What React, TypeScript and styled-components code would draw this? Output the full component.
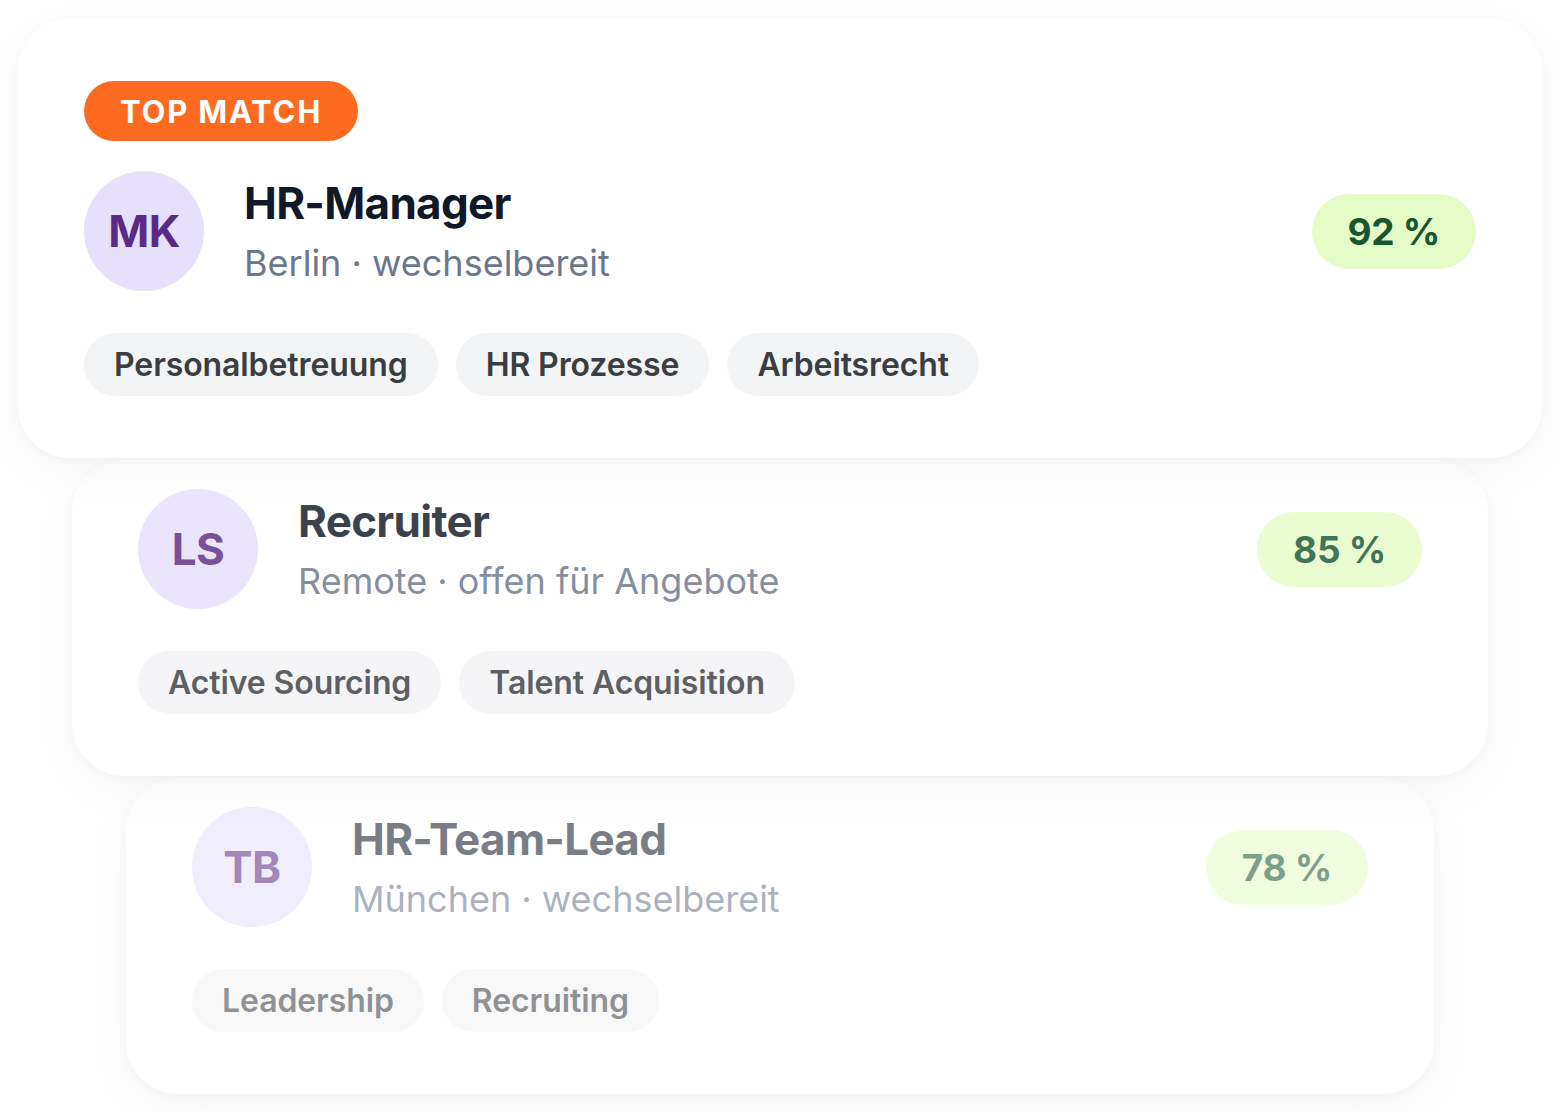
import styled, { createGlobalStyle } from "styled-components";

type Candidate = {
  initials: string;
  title: string;
  meta: string;
  score: number;
  tags: string[];
  topMatch?: boolean;
};

const candidates: Candidate[] = [
  {
    initials: "MK",
    title: "HR-Manager",
    meta: "Berlin · wechselbereit",
    score: 92,
    tags: ["Personalbetreuung", "HR Prozesse", "Arbeitsrecht"],
    topMatch: true,
  },
  {
    initials: "LS",
    title: "Recruiter",
    meta: "Remote · offen für Angebote",
    score: 85,
    tags: ["Active Sourcing", "Talent Acquisition"],
  },
  {
    initials: "TB",
    title: "HR-Team-Lead",
    meta: "München · wechselbereit",
    score: 78,
    tags: ["Leadership", "Recruiting"],
  },
];

// each card further down the stack is narrower and more faded
const depthStyles = [
  { inset: 0, fade: 1, padTop: 63 },
  { inset: 54, fade: 0.82, padTop: 29 },
  { inset: 108, fade: 0.56, padTop: 29 },
];

export default function App() {
  return (
    <>
      <GlobalStyle />
      <Stack>
        {candidates.map((c, i) => {
          const d = depthStyles[i];
          return (
            <Card key={c.title} $inset={d.inset} $padTop={d.padTop} $level={i}>
              <Content $fade={d.fade}>
                {c.topMatch && <Badge>TOP MATCH</Badge>}
                <Header>
                  <Avatar>{c.initials}</Avatar>
                  <Info>
                    <Name>{c.title}</Name>
                    <Meta>{c.meta}</Meta>
                  </Info>
                  <Score>{c.score} %</Score>
                </Header>
                <Tags>
                  {c.tags.map((t) => (
                    <Tag key={t}>{t}</Tag>
                  ))}
                </Tags>
              </Content>
            </Card>
          );
        })}
      </Stack>
    </>
  );
}

const GlobalStyle = createGlobalStyle`
  html, body {
    margin: 0;
    background: #ffffff;
    font-family: Inter, "Noto Sans", "Liberation Sans", sans-serif;
    -webkit-font-smoothing: antialiased;
  }
`;

const Stack = styled.div`
  display: flex;
  flex-direction: column;
  gap: 2px;
  padding: 18px;
`;

const Card = styled.div<{ $inset: number; $padTop: number; $level: number }>`
  position: relative;
  z-index: ${(p) => 3 - p.$level};
  margin: 0 ${(p) => p.$inset}px;
  padding: ${(p) => p.$padTop}px 66px 62px;
  background: #ffffff;
  border-radius: 52px;
  box-shadow: 0 14px 44px rgba(20, 20, 30, 0.045), 0 2px 10px rgba(20, 20, 30, 0.02);
`;

const Content = styled.div<{ $fade: number }>`
  opacity: ${(p) => p.$fade};
`;

const Badge = styled.div`
  display: inline-flex;
  align-items: center;
  height: 60px;
  padding: 0 36px;
  margin-bottom: 30px;
  border-radius: 30px;
  background: #ff6a21;
  color: #ffffff;
  font-size: 31px;
  font-weight: 700;
  letter-spacing: 1.8px;
`;

const Header = styled.div`
  display: flex;
  align-items: center;
  gap: 40px;
`;

const Avatar = styled.div`
  flex: none;
  width: 120px;
  height: 120px;
  border-radius: 50%;
  background: #e6e0fd;
  color: #5b2a86;
  display: flex;
  align-items: center;
  justify-content: center;
  font-size: 44px;
  font-weight: 700;
  letter-spacing: -0.5px;
`;

const Info = styled.div`
  flex: 1;
  display: flex;
  flex-direction: column;
  gap: 12px;
`;

const Name = styled.div`
  font-size: 44px;
  font-weight: 700;
  line-height: 52px;
  color: #111827;
  letter-spacing: -0.7px;
`;

const Meta = styled.div`
  font-size: 36px;
  font-weight: 400;
  line-height: 44px;
  color: #6b778c;
  letter-spacing: 0;
`;

const Score = styled.div`
  flex: none;
  height: 75px;
  padding: 0 36px;
  border-radius: 38px;
  background: #e6fcc6;
  color: #15572f;
  display: flex;
  align-items: center;
  font-size: 37px;
  font-weight: 700;
  letter-spacing: -0.3px;
`;

const Tags = styled.div`
  display: flex;
  gap: 18px;
  margin-top: 42px;
`;

const Tag = styled.div`
  height: 63px;
  padding: 0 30px;
  border-radius: 32px;
  background: #f3f4f6;
  color: #3a3d42;
  display: flex;
  align-items: center;
  font-size: 32px;
  font-weight: 600;
  letter-spacing: -0.1px;
`;
